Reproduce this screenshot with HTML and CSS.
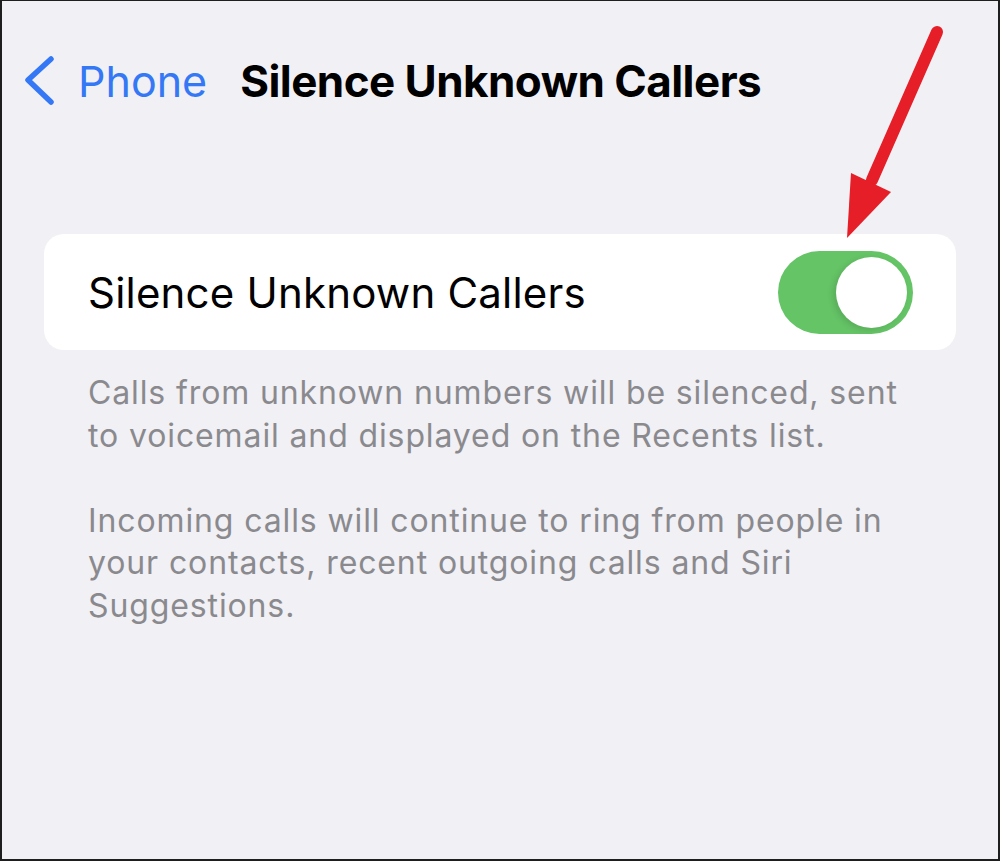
FILE: index.html
```html
<!DOCTYPE html>
<html lang="en">
<head>
  <meta charset="UTF-8">
  <meta name="viewport" content="width=device-width, initial-scale=1">
  <title>Silence Unknown Callers</title>
  <link rel="stylesheet" href="styles.css">
</head>
<body>

  <div class="screen">
    <header class="nav">
      <a class="back" href="#">
        <svg class="chevron" width="30" height="50" viewBox="0 0 30 50">
          <polyline points="27,3 4,24 27,46" fill="none" stroke="currentColor" stroke-width="5.5" stroke-linecap="round" stroke-linejoin="round"/>
        </svg>
        <span>Phone</span>
      </a>
      <h1>Silence Unknown Callers</h1>
    </header>

    <div class="group">
      <div class="row">
        <span class="row-label">Silence Unknown Callers</span>
        <label class="switch">
          <input type="checkbox" checked>
          <span class="knob"></span>
        </label>
      </div>
    </div>

    <div class="footnote">
      <p>Calls from unknown numbers will be silenced, sent to voicemail and displayed on the Recents list.</p>
      <p>Incoming calls will continue to ring from people in your contacts, recent outgoing calls and Siri Suggestions.</p>
    </div>

    <!-- callout pointing at the switch -->
    <svg class="callout" width="1000" height="861" viewBox="0 0 1000 861">
      <line x1="937" y1="32" x2="872" y2="180" stroke="#e61e27" stroke-width="12" stroke-linecap="round"/>
      <polygon points="847,238 851,173 891,192" fill="#e61e27"/>
    </svg>
  </div>

</body>
</html>
```

FILE: styles.css
```css
* {
  box-sizing: border-box;
}
body {
  margin: 0;
  font-family: Inter, 'Liberation Sans', sans-serif;
}
.screen {
  position: relative;
  width: 1000px;
  height: 861px;
  background: #f1f0f5;
  border: 2px solid #1e1e1e;
  border-top-width: 1px;
  padding: 49px 42px 0;
  overflow: hidden;
}
.nav {
  display: flex;
  align-items: center;
  height: 62px;
  margin-left: -20px;
}
.back {
  display: flex;
  align-items: center;
  color: #3478f6;
  text-decoration: none;
  font-size: 43px;
  gap: 24px;
}
.chevron {
  display: block;
}
.nav h1 {
  margin: 0 0 0 33px;
  font-size: 44px;
  font-weight: 700;
  color: #000;
  letter-spacing: -0.55px;
}
.group {
  margin-top: 122px;
  background: #fff;
  border-radius: 20px;
}
.row {
  display: flex;
  align-items: center;
  justify-content: space-between;
  height: 116px;
  padding: 0 43px 0 44px;
}
.row-label {
  font-size: 42px;
  letter-spacing: 0.2px;
  color: #000;
}
.switch {
  position: relative;
  display: block;
  width: 135px;
  height: 83px;
}
.switch input {
  display: none;
}
.switch .knob {
  position: absolute;
  inset: 0;
  background: #65c466;
  border-radius: 42px;
}
.switch .knob::after {
  content: "";
  position: absolute;
  top: 6px;
  right: 6px;
  width: 71px;
  height: 71px;
  border-radius: 50%;
  background: #fff;
  box-shadow: -3px 2px 6px rgba(0, 0, 0, 0.12);
}
.footnote {
  padding: 22px 44px 0;
  color: #8a8a8e;
  font-size: 32px;
  letter-spacing: 0.88px;
  line-height: 42.5px;
}
.footnote p {
  margin: 0 0 42.5px;
}
.callout {
  position: absolute;
  top: -1px;
  left: -2px;
  pointer-events: none;
}
```
